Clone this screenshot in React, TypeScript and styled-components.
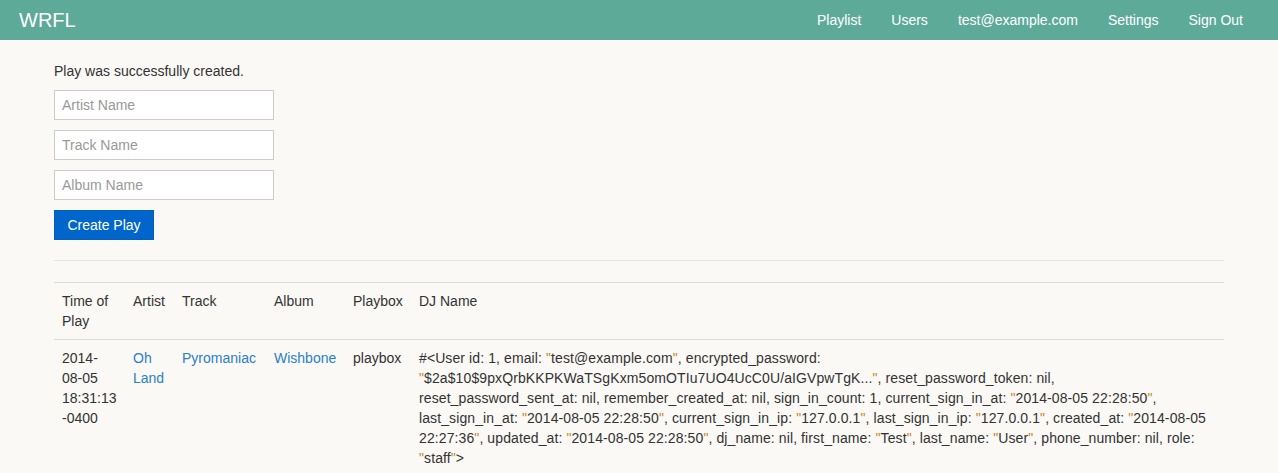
import React from "react";
import styled, { createGlobalStyle } from "styled-components";

const Global = createGlobalStyle`
  * { box-sizing: border-box; }
  body {
    margin: 0;
    background: #faf9f5;
    font-family: "Liberation Sans", Arial, Helvetica, sans-serif;
    font-size: 14px;
    line-height: 20px;
    color: #333;
  }
`;

const NavBar = styled.nav`
  height: 40px;
  background: #5daa99;
  display: flex;
  align-items: center;
  justify-content: space-between;
  padding: 0 20px 0 19px;
`;

const Brand = styled.a`
  color: #fff;
  font-size: 20px;
  line-height: 40px;
  text-decoration: none;
`;

const NavList = styled.div`
  display: flex;
`;

const NavLink = styled.a`
  color: #fff;
  padding: 0 15px;
  line-height: 40px;
  text-decoration: none;
`;

const Container = styled.main`
  width: 1170px;
  margin: 0 auto;
  padding-top: 21px;
`;

const Notice = styled.p`
  margin: 0 0 9px;
`;

const Form = styled.form`
  display: flex;
  flex-direction: column;
  align-items: flex-start;
  gap: 10px;
`;

const Input = styled.input`
  width: 220px;
  height: 30px;
  border: 1px solid #ccc;
  background: #fff;
  padding: 0 7px;
  font-family: inherit;
  font-size: 14px;
  color: #333;
  &::placeholder { color: #999; }
`;

const Button = styled.button`
  width: 100px;
  height: 30px;
  background: #0066cc;
  border: 1px solid #0060c0;
  color: #fff;
  font-family: inherit;
  font-size: 14px;
  padding: 0;
`;

const Rule = styled.hr`
  border: 0;
  border-top: 1px solid #e6e5e1;
  margin: 20px 0 21px;
`;

const Table = styled.table`
  width: 100%;
  border-collapse: collapse;
  border-top: 1px solid #dddcd8;
`;

const Th = styled.th<{ $w?: number }>`
  text-align: left;
  font-weight: normal;
  vertical-align: top;
  padding: 8px;
  border-bottom: 1px solid #dddcd8;
  width: ${(p) => (p.$w ? `${p.$w}px` : "auto")};
`;

const Td = styled.td`
  vertical-align: top;
  padding: 8px;
`;

const DjCell = styled(Td)`
  letter-spacing: 0.1px;
`;

const Link = styled.a`
  color: #2a80c9;
  text-decoration: none;
`;

const Q = styled.span`
  color: #c8862c;
`;

const S = ({ children }: { children: React.ReactNode }) => (
  <>
    <Q>"</Q>
    {children}
    <Q>"</Q>
  </>
);

export default function App() {
  return (
    <>
      <Global />
      <NavBar>
        <Brand href="#">WRFL</Brand>
        <NavList>
          <NavLink href="#">Playlist</NavLink>
          <NavLink href="#">Users</NavLink>
          <NavLink href="#">test@example.com</NavLink>
          <NavLink href="#">Settings</NavLink>
          <NavLink href="#">Sign Out</NavLink>
        </NavList>
      </NavBar>
      <Container>
        <Notice>Play was successfully created.</Notice>
        <Form onSubmit={(e) => e.preventDefault()}>
          <Input placeholder="Artist Name" />
          <Input placeholder="Track Name" />
          <Input placeholder="Album Name" />
          <Button type="submit">Create Play</Button>
        </Form>
        <Rule />
        <Table>
          <thead>
            <tr>
              <Th $w={71}>Time of Play</Th>
              <Th $w={49}>Artist</Th>
              <Th $w={92}>Track</Th>
              <Th $w={79}>Album</Th>
              <Th $w={66}>Playbox</Th>
              <Th>DJ Name</Th>
            </tr>
          </thead>
          <tbody>
            <tr>
              <Td>2014-08-05 18:31:13 -0400</Td>
              <Td><Link href="#">Oh Land</Link></Td>
              <Td><Link href="#">Pyromaniac</Link></Td>
              <Td><Link href="#">Wishbone</Link></Td>
              <Td>playbox</Td>
              <DjCell>
                #&lt;User id: 1, email: <S>test@example.com</S>, encrypted_password:
                <br />
                <S>$2a$10$9pxQrbKKPKWaTSgKxm5omOTIu7UO4UcC0U/aIGVpwTgK...</S>, reset_password_token: nil,
                <br />
                reset_password_sent_at: nil, remember_created_at: nil, sign_in_count: 1, current_sign_in_at:{" "}
                <S>2014-08-05 22:28:50</S>,
                <br />
                last_sign_in_at: <S>2014-08-05 22:28:50</S>, current_sign_in_ip: <S>127.0.0.1</S>, last_sign_in_ip:{" "}
                <S>127.0.0.1</S>, created_at: <Q>"</Q>2014-08-05
                <br />
                22:27:36<Q>"</Q>, updated_at: <S>2014-08-05 22:28:50</S>, dj_name: nil, first_name: <S>Test</S>,
                last_name: <S>User</S>, phone_number: nil, role:
                <br />
                <S>staff</S>&gt;
              </DjCell>
            </tr>
          </tbody>
        </Table>
      </Container>
    </>
  );
}
